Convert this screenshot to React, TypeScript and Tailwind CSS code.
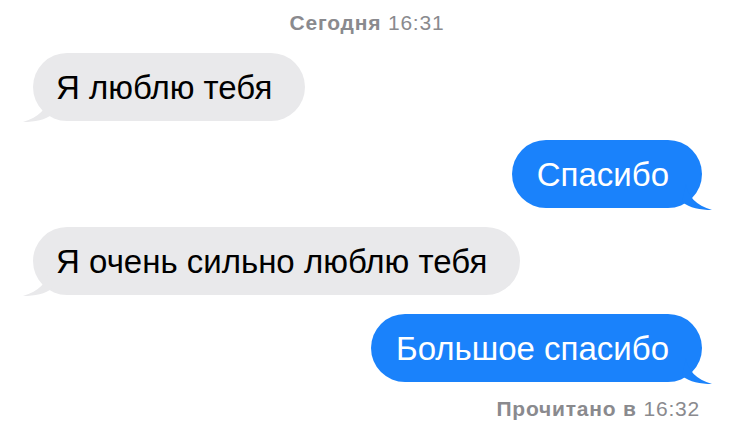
import React from "react";

type Msg = { text: string; mine: boolean };

const messages: Msg[] = [
  { text: "Я люблю тебя", mine: false },
  { text: "Спасибо", mine: true },
  { text: "Я очень сильно люблю тебя", mine: false },
  { text: "Большое спасибо", mine: true },
];

function Tail({ mine }: { mine: boolean }) {
  // small curved tail under the bubble corner
  if (mine) {
    return (
      <svg
        className="absolute -right-[10px] bottom-[-2px] w-[30px] h-[26px]"
        viewBox="0 0 30 26"
      >
        <path d="M4 0 C6 13 14 21 30 26 C18 26 8 24 0 18 Z" fill="#1a82fb" />
      </svg>
    );
  }
  return (
    <svg
      className="absolute -left-[10px] bottom-[-1px] w-[30px] h-[26px]"
      viewBox="0 0 30 26"
    >
      <path d="M26 0 C24 13 16 21 0 26 C12 26 22 24 30 18 Z" fill="#e9e9eb" />
    </svg>
  );
}

function Bubble({ msg }: { msg: Msg }) {
  const base =
    "relative h-[68px] flex items-center rounded-[34px] text-[33px] leading-none";
  return (
    <div className={msg.mine ? "flex justify-end pr-[32px]" : "flex justify-start pl-[33px]"}>
      <div
        className={
          msg.mine
            ? base + " bg-[#1a82fb] text-white pl-[25px] pr-[33px]"
            : base + " bg-[#e9e9eb] text-black pl-[23px] pr-[33px]"
        }
      >
        <Tail mine={msg.mine} />
        <span className="relative">{msg.text}</span>
      </div>
    </div>
  );
}

export default function App() {
  return (
    <div
      className="w-[734px] h-[433px] bg-white overflow-hidden flex flex-col"
      style={{ fontFamily: '"Liberation Sans", Arial, sans-serif' }}
    >
      <div className="pt-[11px] text-center text-[21px] tracking-[0.8px] text-[#8a8a8e] leading-[24px]">
        <span className="font-bold">Сегодня</span> 16:31
      </div>
      <div className="flex flex-col gap-[19px] mt-[18px]">
        {messages.map((m, i) => (
          <Bubble key={i} msg={m} />
        ))}
      </div>
      <div className="mt-[15px] pr-[34px] text-right text-[21px] tracking-[0.8px] text-[#8a8a8e] leading-[24px]">
        <span className="font-bold">Прочитано в</span> 16:32
      </div>
    </div>
  );
}
